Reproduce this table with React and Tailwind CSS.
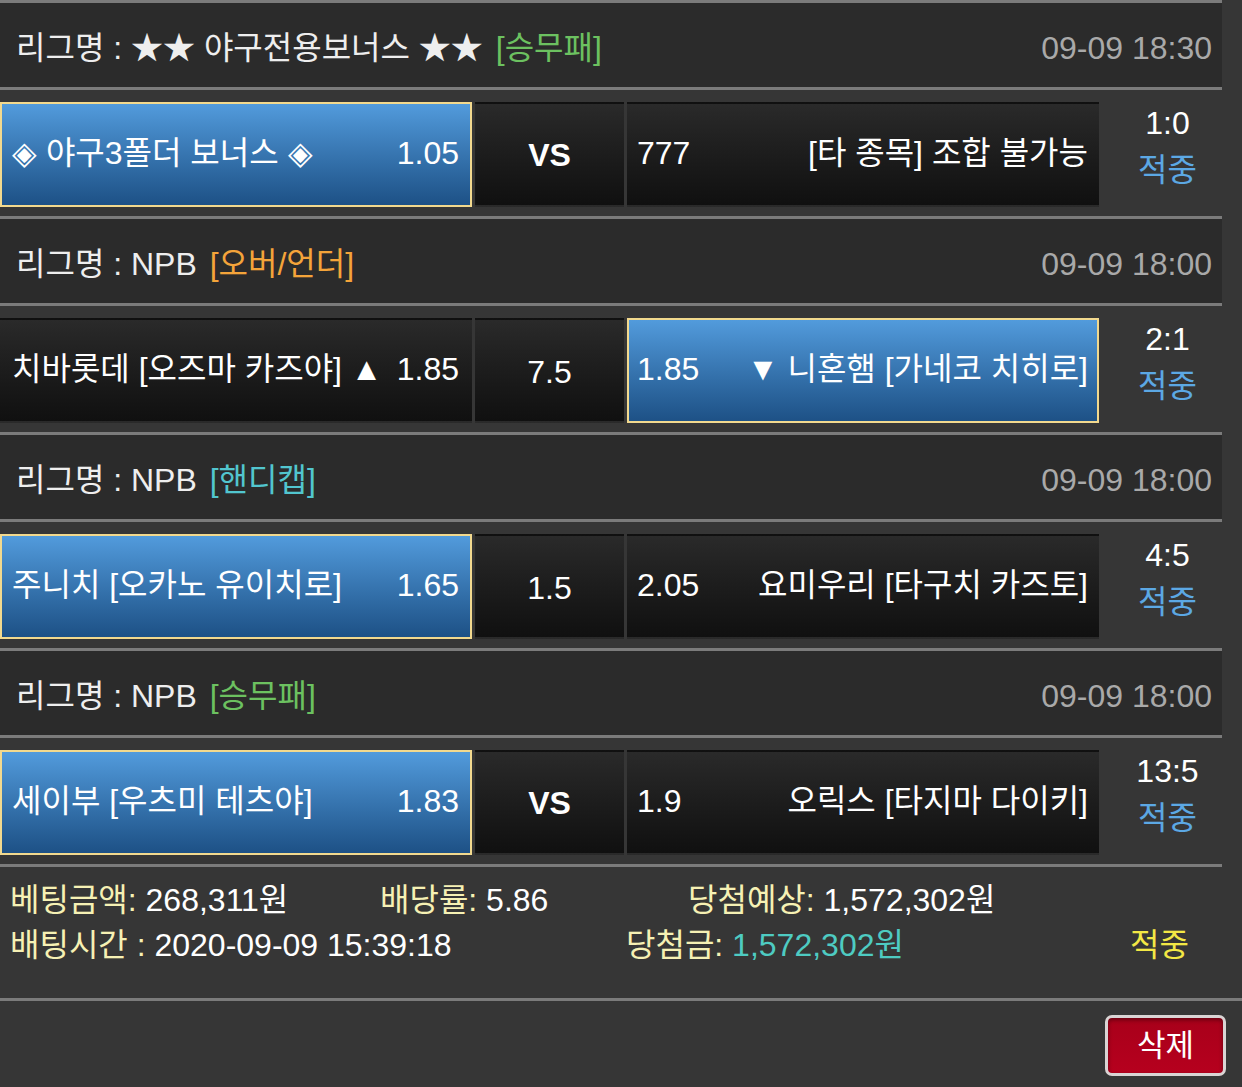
import React from 'react';

const games = [
    {
        league: '★★ 야구전용보너스 ★★',
        type: '[승무패]',
        typeColor: 'text-[#6cc160]',
        time: '09-09 18:30',
        home: '◈ 야구3폴더 보너스 ◈',
        homeOdds: '1.05',
        mid: 'VS',
        away: '[타 종목] 조합 불가능',
        awayOdds: '777',
        pick: 'home',
        score: '1:0',
    },
    {
        league: 'NPB',
        type: '[오버/언더]',
        typeColor: 'text-[#f4a43a]',
        time: '09-09 18:00',
        home: '치바롯데 [오즈마 카즈야] ▲',
        homeOdds: '1.85',
        mid: '7.5',
        away: '▼ 니혼햄 [가네코 치히로]',
        awayOdds: '1.85',
        pick: 'away',
        score: '2:1',
    },
    {
        league: 'NPB',
        type: '[핸디캡]',
        typeColor: 'text-[#52c6cf]',
        time: '09-09 18:00',
        home: '주니치 [오카노 유이치로]',
        homeOdds: '1.65',
        mid: '1.5',
        away: '요미우리 [타구치 카즈토]',
        awayOdds: '2.05',
        pick: 'home',
        score: '4:5',
    },
    {
        league: 'NPB',
        type: '[승무패]',
        typeColor: 'text-[#6cc160]',
        time: '09-09 18:00',
        home: '세이부 [우츠미 테츠야]',
        homeOdds: '1.83',
        mid: 'VS',
        away: '오릭스 [타지마 다이키]',
        awayOdds: '1.9',
        pick: 'home',
        score: '13:5',
    },
];

const picked = 'bg-gradient-to-b from-[#529bdc] to-[#1d5186] border-2 border-[#f2d98e]';
const plain = 'bg-gradient-to-b from-[#2a2a2a] to-[#101010] border-2 border-transparent';

function Line() {
    return <div className="h-[3px] w-[1222px] bg-[#7b7b7b]" />;
}

function Game({ g }) {
    return (
        <>
            <div className="flex h-[84px] w-[1222px] items-center justify-between bg-[#2b2b2b] pl-[16px] pr-[10px] pt-[6px]">
                <div className="text-[#eeeeee]">
                    리그명 : {g.league} <span className={`ml-[4px] ${g.typeColor}`}>{g.type}</span>
                </div>
                <div className="text-[#a9a9a9]">{g.time}</div>
            </div>
            <Line />
            <div className="flex h-[126px] w-[1222px] pt-[12px]">
                <div className={`flex h-[105px] w-[472px] items-center justify-between pb-[4px] pl-[10px] pr-[11px] ${g.pick === 'home' ? picked : plain}`}>
                    <span>{g.home}</span>
                    <span>{g.homeOdds}</span>
                </div>
                <div className={`ml-[3px] flex h-[105px] w-[149px] items-center justify-center ${plain} ${g.mid === 'VS' ? 'font-bold' : 'pt-[2px]'}`}>
                    {g.mid}
                </div>
                <div className={`ml-[3px] flex h-[105px] w-[472px] items-center justify-between pb-[4px] pl-[8px] pr-[9px] ${g.pick === 'away' ? picked : plain}`}>
                    <span>{g.awayOdds}</span>
                    <span>{g.away}</span>
                </div>
                <div className="-mt-[2px] flex w-[123px] flex-col items-center pl-[14px] leading-[47px]">
                    <span>{g.score}</span>
                    <span className="text-[#5ca8e4]">적중</span>
                </div>
            </div>
            <Line />
        </>
    );
}

export default function App() {
    return (
        <div
            className="min-h-[1087px] w-[1242px] bg-[#363636] text-[32px] leading-[46px] text-white"
            style={{ fontFamily: '"Liberation Sans", "Noto Sans CJK KR", sans-serif' }}
        >
            <Line />
            {games.map((g, i) => (
                <Game key={i} g={g} />
            ))}
            <div className="h-[131px] pt-[11px] leading-[45px]">
                <div className="flex">
                    <div className="w-[380px] pl-[10px]">
                        <span className="text-[#f6f1b4]">베팅금액:</span> 268,311원
                    </div>
                    <div className="w-[308px]">
                        <span className="text-[#f6f1b4]">배당률:</span> 5.86
                    </div>
                    <div>
                        <span className="text-[#f6f1b4]">당첨예상:</span> 1,572,302원
                    </div>
                </div>
                <div className="flex">
                    <div className="w-[626px] pl-[10px]">
                        <span className="text-[#f6f1b4]">배팅시간 :</span> 2020-09-09 15:39:18
                    </div>
                    <div className="w-[504px]">
                        <span className="text-[#f6f1b4]">당첨금:</span> <span className="text-[#4ecbc2]">1,572,302원</span>
                    </div>
                    <div className="text-[#f3e845]">적중</div>
                </div>
            </div>
            <div className="h-[3px] w-full bg-[#7b7b7b]" />
            <div className="flex justify-end pr-[16px] pt-[14px]">
                <button className="flex h-[61px] w-[121px] items-center justify-center rounded-[7px] border-[3px] border-[#d9d4d4] bg-gradient-to-b from-[#a8001a] to-[#b6001e] text-[31px] text-white shadow-[inset_0_2px_4px_rgba(0,0,0,0.4)]">
                    삭제
                </button>
            </div>
        </div>
    );
}
